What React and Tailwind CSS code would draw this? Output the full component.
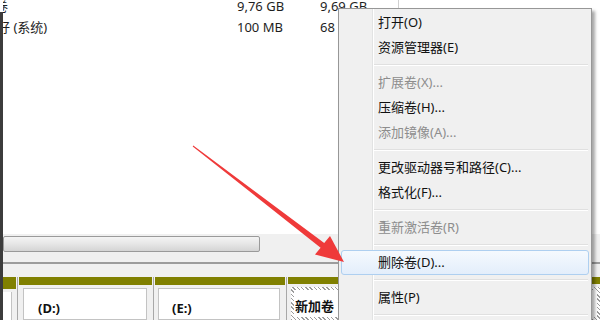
import React from 'react';

const font = { fontFamily: '"Noto Sans", "Noto Sans CJK SC", sans-serif' };

const menuItems = [
  { label: '打开(O)' },
  { label: '资源管理器(E)' },
  { sep: true },
  { label: '扩展卷(X)...', disabled: true },
  { label: '压缩卷(H)...' },
  { label: '添加镜像(A)...', disabled: true },
  { sep: true },
  { label: '更改驱动器号和路径(C)...' },
  { label: '格式化(F)...' },
  { sep: true },
  { label: '重新激活卷(R)', disabled: true },
  { sep: true },
  { label: '删除卷(D)...', active: true },
  { sep: true },
  { label: '属性(P)' },
  { sep: true },
  { label: '帮助(H)' },
];

const ContextMenu = () => (
  <div className="absolute left-[338px] top-[8px] w-[254px] h-[330px] border border-[#979797] bg-[#f0f0f0] shadow-[3px_3px_3px_rgba(0,0,0,0.35)]">
    {/* icon gutter */}
    <div className="absolute left-[33px] top-0 bottom-0 w-px bg-[#e2e3e3]" />
    <div className="absolute left-[34px] top-0 bottom-0 w-px bg-white" />
    <div className="relative pt-[1px]">
      {menuItems.map((it, i) =>
        it.sep ? (
          <div key={i} className="h-[10px] flex flex-col justify-center ml-[35px] mr-[3px]">
            <div className="h-px bg-[#e0e0e0]" />
            <div className="h-px bg-white" />
          </div>
        ) : (
          <div
            key={i}
            className={
              'h-[25px] mx-[2px] flex items-center text-[13px] ' +
              (it.active
                ? 'border border-[#aecff0] rounded-[3px] bg-gradient-to-b from-[#f5f9fe] to-[#e3eefb] pl-[36px] '
                : 'pl-[37px] ') +
              (it.disabled ? 'text-[#8d8d8d]' : 'text-[#111]')
            }
          >
            {it.label}
          </div>
        )
      )}
    </div>
  </div>
);

const Arrow = () => (
  <svg className="absolute inset-0 pointer-events-none" width="600" height="320" viewBox="0 0 600 320">
    <polygon
      points="193.3,145.6 324.2,243 330,236 344,262 315,254.6 320.6,247.8 192.7,146.4"
      fill="#ef3a3a"
    />
  </svg>
);

const Segment = ({ w, boxClass, children, last }) => (
  <div className={'flex flex-col ' + (last ? 'flex-1' : 'border-r border-[#a8a8a8] pr-[1px]')} style={w ? { width: w } : undefined}>
    <div className="h-[17px] bg-[#808000]" />
    <div className={'mt-[3px] h-[40px] ' + boxClass}>{children}</div>
  </div>
);

export default function App() {
  return (
    <div className="relative w-[600px] h-[320px] overflow-hidden bg-white flex" style={font}>
      <div className="w-[3px] mt-[12px] bg-[#3c3c3c]" />
      <div className="flex-1 flex flex-col overflow-hidden">
        {/* volume list */}
        <div className="-mt-[4px] text-[13px] text-[#1e1e1e]">
          <div className="flex h-[21px] leading-[21px]">
            <div className="w-[234px] overflow-hidden"><span className="-ml-[8px] inline-block">卷</span></div>
            <div className="w-[83px]">9,76 GB</div>
            <div className="w-[78px]">9,69 GB</div>
            <div className="flex-1 border-l border-[#d0d0d0]" />
          </div>
          <div className="flex h-[21px] leading-[21px]">
            <div className="w-[234px] overflow-hidden whitespace-nowrap"><span className="-ml-[6px] inline-block">好 (系统)</span></div>
            <div className="w-[83px]">100 MB</div>
            <div className="w-[78px]">68 MB</div>
            <div className="flex-1 border-l border-[#d0d0d0]" />
          </div>
        </div>
        <div className="flex-1" />
        {/* horizontal scrollbar */}
        <div className="h-[28px] bg-[#f0f0f0] pt-[2px]">
          <div className="w-[257px] h-[16px] rounded-[2px] border border-[#9a9a9a] bg-gradient-to-b from-[#f4f4f4] via-[#e6e6e6] to-[#d4d4d4]" />
        </div>
        <div className="h-[2px] bg-[#9c9c9c]" />
        {/* disk layout */}
        <div className="h-[56px] bg-[#f0f0f0] pt-[13px]">
          <div className="flex gap-[1px] h-full">
            <Segment w={15} boxClass="bg-white border-r border-[#c3c3c3] mr-[4px]" />
            <Segment w={135} boxClass="ml-[4px] mr-[5px] bg-white border border-[#c3c3c3] pl-[14px] pt-[6px]">
              <span className="text-[13px] font-bold text-[#111]">(D:)</span>
            </Segment>
            <Segment w={132} boxClass="ml-[3px] mr-[5px] bg-white border border-[#c3c3c3] pl-[13px] pt-[6px]">
              <span className="text-[13px] font-bold text-[#111]">(E:)</span>
            </Segment>
            <Segment last boxClass="ml-[3px] p-[3px] bg-[repeating-linear-gradient(45deg,#9c9c9c_0px,#9c9c9c_1px,#ffffff_1px,#ffffff_3px)]">
              <div className="h-full bg-white pl-[1px] pt-[3px]">
                <span className="text-[13px] font-bold text-[#111]">新加卷</span>
              </div>
            </Segment>
          </div>
        </div>
      </div>
      <ContextMenu />
      <Arrow />
    </div>
  );
}
